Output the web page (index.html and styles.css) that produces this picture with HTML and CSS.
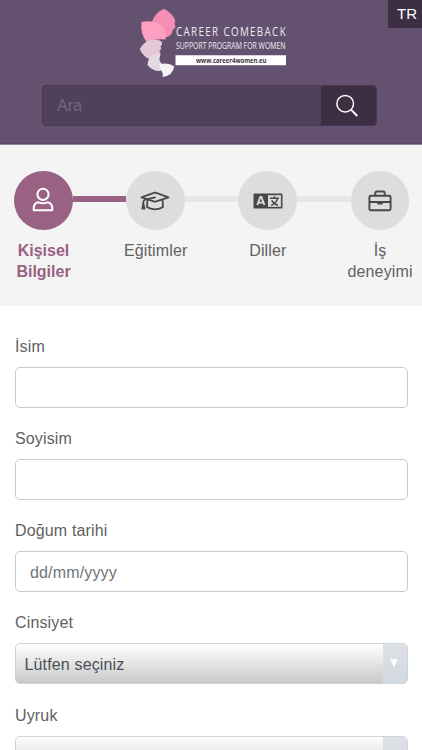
FILE: index.html
```html
<!DOCTYPE html>
<html lang="tr">
<head>
<meta charset="utf-8">
<title>Career Comeback</title>
<link rel="stylesheet" href="styles.css">
</head>
<body>
<header class="header">
  <a class="lang">TR</a>
  <svg class="logo" viewBox="136 5 154 75">
    <path fill="#f48fb3" d="M164 8.800Q172 13 175.300 20.500Q173.800 24 175.700 27Q172.500 29 172 33Q170 36.500 166 37.500L152 22Q155 12.500 164 8.800Z"/>
    <path fill="#fd9fc0" d="M141.500 22Q153 19.500 160 24.500Q167 30.500 165.500 39.500Q155 38 147 42.500Q140 34 141.500 22Z"/>
    <path fill="#e5c8d5" d="M139.800 49Q145 39 156 39.800Q163 40.500 162 44.500L160.500 46.500L161.300 48.500L159.300 51.500L160.600 53L159.700 56L152 60.500Q143 57 139.800 49Z"/>
    <path fill="#e2dae2" d="M147.500 65.300Q148 54.500 158 53.500L160.500 55Q158.500 59 160.300 62L163 65L160.500 71Q153 71.500 147.500 65.300Z"/>
    <path fill="#f4f3f5" d="M159.500 64.500Q167 62 174.300 66.200Q173 75.500 162.500 77Q163.500 72.500 160.800 70Z"/>
    <text class="logo-title" x="176" y="36.400" textLength="111" lengthAdjust="spacingAndGlyphs">CAREER COMEBACK</text>
    <text class="logo-sub" x="176" y="49.200" textLength="109.500" lengthAdjust="spacingAndGlyphs">SUPPORT PROGRAM FOR WOMEN</text>
    <path fill="#fff" d="M175.500 55.300H286V65.200H175.500Z"/>
    <text class="logo-url" x="196" y="62.700" textLength="70.500" lengthAdjust="spacingAndGlyphs">www.career4women.eu</text>
  </svg>
  <div class="search">
    <span class="search-text">Ara</span>
    <span class="search-btn">
      <svg width="24" height="24" viewBox="0 0 24 24" fill="none" stroke="#fff" stroke-width="1.500"><circle cx="10.200" cy="9.700" r="8.300"/><path d="M16 15.700L22.300 22" stroke-width="1.900"/></svg>
    </span>
  </div>
</header>
<nav class="steps">
  <div class="step active">
    <span class="dot"><svg class="person" width="22" height="26" viewBox="0 0 22 26" fill="none" stroke="#fff" stroke-width="2"><circle cx="11" cy="7.300" r="5.600"/><path d="M6.600 15.300Q11 17.200 15.400 15.300Q20.300 16.200 20.300 21.500V23.300H1.700V21.500Q1.700 16.200 6.600 15.300Z" stroke-linejoin="round"/></svg></span>
    <span class="name">Kişisel Bilgiler</span>
  </div>
  <div class="step">
    <span class="dot"><svg width="30" height="20" viewBox="0 0 30 20" fill="none" stroke="#484848" stroke-width="1.800" stroke-linejoin="round" stroke-linecap="round"><path d="M1.500 6.300L14.500 1.700Q15 1.600 15.500 1.700L28.500 6.300L15.500 10.600Q15 10.700 14.500 10.600Z"/><path d="M7.500 9L7 16Q10 18.300 15 18.300T23 16L22.500 9M15 6.300L5 8.700Q3.300 9.300 3.300 12"/><path d="M3.300 12.500L2.300 17.700H4.500Z" fill="#484848"/></svg></span>
    <span class="name">Eğitimler</span>
  </div>
  <div class="step">
    <span class="dot"><svg width="30" height="16" viewBox="0 0 30 16"><rect x=".5" y=".5" width="29" height="15" rx="1" fill="#484848"/><path fill="#ddd" d="M15 2.200H27.900V13.800H15Z"/><path d="M4.300 12L7.300 4H8.400L11.400 12M5.500 9.600H10.200" fill="none" stroke="#ddd" stroke-width="1.900"/><path d="M17 5.300H26M21.500 3.300V5M18.300 12.300Q23.500 10 24.500 5.600M18.700 7.400Q20.500 11 25 12.200" fill="none" stroke="#484848" stroke-width="1.500"/></svg></span>
    <span class="name">Diller</span>
  </div>
  <div class="step">
    <span class="dot"><svg width="24" height="22" viewBox="0 0 24 22" fill="none" stroke="#484848" stroke-width="1.900" stroke-linejoin="round"><rect x="1.400" y="5.700" width="21.200" height="14.600" rx="1.500"/><path d="M7.300 5.500V3Q7.300 1.500 8.800 1.500H15.200Q16.700 1.500 16.700 3V5.500M1.400 12H22.600"/><path d="M9.800 12.500H14.200V13.800H9.800Z" fill="#484848" stroke-width="1.200"/></svg></span>
    <span class="name">İş deneyimi</span>
  </div>
</nav>
<main class="form">
  <div class="field"><label class="label">İsim</label><div class="box"></div></div>
  <div class="field"><label class="label">Soyisim</label><div class="box"></div></div>
  <div class="field"><label class="label">Doğum tarihi</label><div class="box">dd/mm/yyyy</div></div>
  <div class="field"><label class="label">Cinsiyet</label><div class="box select"><span class="value">Lütfen seçiniz</span><span class="arrow"><i class="tri"></i></span></div></div>
  <div class="field"><label class="label">Uyruk</label><div class="box select"><span class="value"></span><span class="arrow"><i class="tri"></i></span></div></div>
</main>
</body>
</html>
```
FILE: styles.css
```css
* { box-sizing: border-box; }
body {
  margin: 0;
  height: 750px;
  overflow: hidden;
  background: #fff;
  color: #616161;
  font: 16px/21px "Liberation Sans", Arial, sans-serif;
  letter-spacing: .15px;
}
.header {
  position: relative;
  height: 145px;
  padding-top: 5px;
  background: #64516f;
  border-bottom: 1px solid #8f8297;
  box-shadow: inset 0 -1px #594763;
}
.lang {
  position: absolute;
  top: 0;
  right: 0;
  width: 34px;
  height: 28px;
  padding-left: 9px;
  background: #3d2e43;
  color: #fff;
  font-size: 15px;
  line-height: 28px;
  letter-spacing: 0;
}
.logo {
  display: block;
  width: 154px;
  height: 75px;
  margin-left: 136px;
  letter-spacing: 0;
  overflow: visible;
}
.logo-title, .logo-sub { fill: #eeeaf0; font-family: "Open Sans", sans-serif; }
.logo-title { font-size: 12.4px; letter-spacing: 1.7px; }
.logo-sub { font-size: 9.8px; }
.logo-url { fill: #3d3042; font: bold 7.5px "Open Sans", sans-serif; }
.search {
  display: flex;
  width: 335px;
  height: 41px;
  margin: 5px 0 0 42px;
  border: 1px solid #473750;
  border-radius: 4px;
  background: #504059;
  overflow: hidden;
}
.search-text {
  flex: 1;
  padding-left: 14px;
  color: #71697f;
  line-height: 40px;
}
.search-btn {
  display: flex;
  width: 55px;
  align-items: center;
  justify-content: center;
  padding-right: 4px;
  background: #3d2e43;
}
.steps {
  display: flex;
  height: 161px;
  padding: 26px 0 0 14px;
  background: #f4f4f4;
}
.step {
  display: flex;
  width: 112.2px;
  flex: none;
  flex-wrap: wrap;
  align-content: flex-start;
  align-items: center;
}
.step:last-child { width: 71px; }
.step::after {
  content: "";
  flex: 1;
  height: 6px;
  margin-bottom: 3px;
  background: #e6e6e6;
}
.step.active::after { background: #996183; }
.step:last-child::after { visibility: hidden; }
.dot {
  display: flex;
  width: 58.5px;
  height: 59px;
  align-items: center;
  justify-content: center;
  border-radius: 50%;
  background: #ddd;
}
.active .dot { background: #996183; }
.person { margin-bottom: 2px; }
.name {
  order: 1;
  width: 70px;
  margin: 10px 0 0 -5.5px;
  text-align: center;
}
.active .name { color: #996183; font-weight: bold; letter-spacing: 0; }
.form {
  height: 444px;
  padding: 29.6px 14.5px 0;
  overflow: hidden;
}
.field { height: 92.3px; }
.label { display: block; height: 31px; padding-left: .5px; }
.box {
  display: flex;
  height: 41px;
  padding-left: 14.5px;
  border: 1px solid #c7c9cc;
  border-radius: 5px;
  overflow: hidden;
  color: #70747b;
  line-height: 41px;
}
.select {
  padding-left: 9px;
  border-color: #ced4da;
  background: linear-gradient(#fff, #c9c9c9);
  color: #495057;
}
.value { flex: 1; }
.arrow {
  width: 24px;
  padding: 14.5px 0 0 7.5px;
  background: linear-gradient(#dde1e6, #d3d9e0);
}
.tri {
  display: block;
  width: 8px;
  height: 8px;
  background: #fff;
  clip-path: polygon(0 0, 100% 0, 50% 100%);
}
.field:last-child { height: 51px; overflow: hidden; }
```
